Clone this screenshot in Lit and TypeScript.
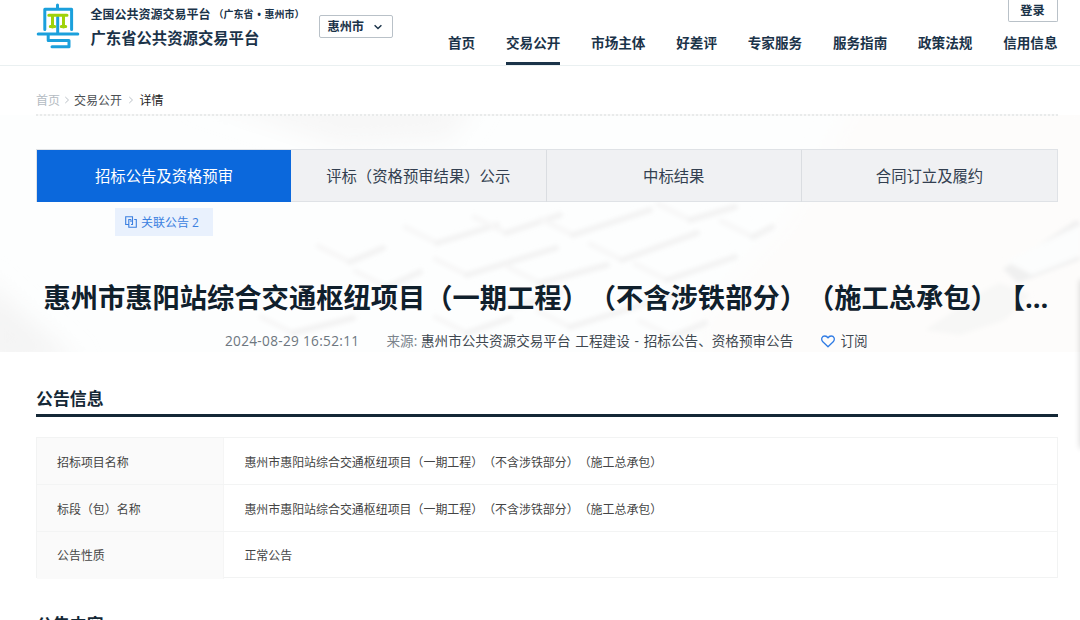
import { LitElement, html, css, svg } from "lit";
import { customElement, property } from "lit/decorators.js";
import { classMap } from "lit/directives/class-map.js";

const NAV = ["首页", "交易公开", "市场主体", "好差评", "专家服务", "服务指南", "政策法规", "信用信息"];
const STAGES = ["招标公告及资格预审", "评标（资格预审结果）公示", "中标结果", "合同订立及履约"];
const PROJECT = "惠州市惠阳站综合交通枢纽项目（一期工程）（不含涉铁部分）（施工总承包）";
const ROWS: [string, string][] = [
  ["招标项目名称", PROJECT],
  ["标段（包）名称", PROJECT],
  ["公告性质", "正常公告"],
];

@customElement("site-header")
export class SiteHeader extends LitElement {
  static styles = css`
    :host { display: block; height: 65px; border-bottom: 1px solid #eaf0f1; background: #fff; color: #1b3349; }
    .bar { display: flex; height: 65px; padding: 0 22.5px 0 36px; box-sizing: border-box; }
    .logo { width: 44px; height: 48px; margin-top: 3px; flex: none; }
    .names { margin-left: 10.5px; padding-top: 4px; flex: none; width: 228.500px; white-space: nowrap; font-weight: 700; }
    .line1 { font-size: 12px; line-height: 21px; height: 21px; display: flex; }
    .region { font-size: 10px; margin-left: 3px; font-weight: 600; display: flex; }
    .dot { width: 11px; text-align: center; font-weight: 700; }
    .line2 { font-size: 15.35px; line-height: 26px; height: 26px; }
    .city { flex: none; box-sizing: border-box; width: 73.500px; height: 23px; margin-top: 15px; border: 1px solid #b9c1c8; border-radius: 2px;
      display: flex; align-items: center; justify-content: space-between; padding: 0 9px 0 7.500px; font-size: 12.2px; font-weight: 600; line-height: 20px; }
    .right { flex: 1; display: flex; flex-direction: column; align-items: flex-end; }
    .login { box-sizing: border-box; width: 50px; height: 22px; border: 1px solid #b9c1c8; border-top: 0; border-radius: 0 0 2px 2px;
      font-size: 12.2px; font-weight: 600; line-height: 21px; text-align: center; }
    .nav { display: flex; gap: 30.75px; height: 43px; }
    .item { box-sizing: border-box; height: 42.500px; line-height: 41.500px; font-size: 13.6px; font-weight: 600; white-space: nowrap; }
    .on { border-bottom: 3px solid #1b3349; }
  `;
  render() {
    return html`<div class="bar">
      <svg class="logo" viewBox="0 0 44 48" fill="none" stroke="#1ba0dc" stroke-width="3" stroke-linecap="round" stroke-linejoin="round">
        <path d="M21.500 2v4M8.800 26.500V6.300H35.600V26.500M21.700 14v16M2.200 31.100H41.800M12.200 32.500v5H33v6.300H16" />
        <path d="M12.800 12.300H31M16.500 13v11M27.500 13v11M14.300 23.600h4.400M25.300 23.600h4.400" stroke="#a0d20a" stroke-width="3" />
      </svg>
      <div class="names">
        <div class="line1"><span>全国公共资源交易平台</span><span class="region"><span>（广东省</span><span class="dot">•</span><span>惠州市）</span></span></div>
        <div class="line2">广东省公共资源交易平台</div>
      </div>
      <div class="city"><span>惠州市</span>
        <svg width="10" height="8" viewBox="0 0 10 8" fill="none" stroke="#1b3349" stroke-width="1.400"><path d="M1.600 2.200 5 5.600 8.400 2.200" /></svg>
      </div>
      <div class="right">
        <div class="login">登录</div>
        <div class="nav">${NAV.map((n, i) => html`<span class=${classMap({ item: true, on: i === 1 })}>${n}</span>`)}</div>
      </div>
    </div>`;
  }
}

/** Faint out-of-focus keyboard and hand behind the notice title. */
@customElement("hero-backdrop")
export class HeroBackdrop extends LitElement {
  static styles = css`
    :host { display: block; }
    .art { display: block; width: 1080px; height: 237px; }
  `;
  render() {
    // Front corner of each key cap and the far end of its shaded edge.
    const keys = [
      [437, 128, 497, 110], [350, 147, 383, 133], [467, 160, 556, 133], [387, 172, 420, 157],
      [506, 118, 560, 100], [573, 120, 650, 95], [622, 145, 697, 118], [753, 122, 772, 112],
      [667, 165, 735, 142], [540, 168, 607, 150], [570, 212, 687, 176], [467, 218, 510, 203],
      [293, 218, 353, 203], [515, 192, 560, 178], [690, 105, 735, 92], [672, 222, 705, 208],
    ];
    return html`<svg class="art" viewBox="0 0 1080 237" preserveAspectRatio="none">
      <defs>
        <filter id="soft" x="-20%" y="-20%" width="140%" height="140%"><feGaussianBlur stdDeviation="2.200" /></filter>
        <filter id="wide" x="-30%" y="-30%" width="160%" height="160%"><feGaussianBlur stdDeviation="12" /></filter>
      </defs>
      <rect width="1080" height="237" fill="#fdfefe" />
      <g filter="url(#wide)">
        <path d="M190 -20H480L450 25 340 30Z" fill="#f7f7f7" />
        <path d="M-20 160 80 250H-20Z" fill="#f4f4f4" />
        <path d="M860 -20H1100V260H705L697 205 735 165 790 105Z" fill="#fdfcfb" />
      </g>
      <g filter="url(#soft)" fill="none" stroke-linecap="round" stroke-linejoin="round">
        ${keys.map(([a, b, c, d]) => svg`<path d="M${a - 32} ${b - 16}L${a} ${b}" stroke="#f7f7f7" stroke-width="5" /><path d="M${a} ${b}L${c} ${d}" stroke="#f3f3f3" stroke-width="6" />`)}
      </g>
      <g filter="url(#soft)">
        <path d="M1003 154 1076 105 1080 108V145L1018 168Z" fill="#f0f0f0" />
        <path d="M1006 146 1080 110V141L1032 160Z" fill="#fcfdfd" />
        <path d="M925 215 985 175 1000 168 1030 180 1005 205 960 220Z" fill="#f7f7f6" />
      </g>
    </svg>`;
  }
}

@customElement("info-section")
export class InfoSection extends LitElement {
  @property() heading = "";
  @property({ attribute: false }) rows: [string, string][] = [];
  static styles = css`
    :host { display: block; padding: 0 22px 0 36px; }
    .heading { height: 31px; line-height: 31px; padding-top: 1px; font-size: 16.9px; font-weight: 700; color: #142836; border-bottom: 3px solid #142836; }
    .table { margin-top: 20px; border: 1px solid #f2f3f3; box-sizing: border-box; height: 141px; display: grid; grid-template-rows: 47px 47px 1fr; font-size: 11.940px; color: #444; }
    .row { display: grid; grid-template-columns: 187px 1fr; grid-template-rows: 100%; border-bottom: 1px solid #f3f4f4; box-sizing: border-box; line-height: 48px; }
    .row:last-child { border-bottom: 0; line-height: 47px; }
    .key { background: #fafafa; border-right: 1px solid #f5f5f5; box-sizing: border-box; padding-left: 20px; }
    .value { padding-left: 20.400px; }
  `;
  render() {
    return html`<div class="heading">${this.heading}</div>
      ${this.rows.length
        ? html`<div class="table">${this.rows.map(([k, v]) => html`<div class="row"><div class="key">${k}</div><div class="value">${v}</div></div>`)}</div>`
        : ""}`;
  }
}

@customElement("app-root")
export class AppRoot extends LitElement {
  static styles = css`
    :host { display: block; position: relative; width: 1080px; height: 620px; overflow: hidden; background: #fff;
      font-family: "Open Sans", "Noto Sans CJK SC", sans-serif; text-spacing-trim: space-all; }
    .crumbs { height: 48px; margin: 0 22px 0 36px; display: flex; align-items: center; padding-top: 20px; box-sizing: border-box;
      font-size: 12px; color: #4c5054; }
    .home { color: #b4bbc2; }
    .here { color: #222; }
    .sep { width: 14px; flex: none; display: flex; justify-content: center; }
    .sep2 { width: 17.5px; }
    .hero { position: relative; height: 238px; }
    .backdrop { position: absolute; inset: 1px 0 0 0; }
    .content { position: relative; padding: 0 22px 0 36px; }
    .rule { height: 2px; background: repeating-linear-gradient(90deg, #e9ebeb 0 2px, #f9f9f9 2px 4px); }
    .tabs { margin-top: 33px; display: grid; grid-template-columns: 254px 255.500px 255.500px 1fr; height: 53px; box-sizing: border-box;
      border: 1px solid #dfe2e6; background: #f0f1f3; }
    .tab { text-align: center; line-height: 52px; font-size: 15.35px; color: #333f50; border-right: 1px solid #dadde1; box-sizing: border-box; }
    .tab:last-child { border-right: 0; }
    .active { background: #0b68dc; color: #fff; border-right: 0; }
    .related { margin: 6px 0 0 79px; width: 98px; height: 28px; display: flex; align-items: center; box-sizing: border-box; padding-left: 10px; gap: 4px;
      background: #e9f1fd; color: #3b7fe0; font-size: 12px; white-space: nowrap; }
    .title { margin: 40px 0 0; padding-left: 7.500px; font-size: 27.270px; line-height: 43px; height: 44px; font-weight: 700; color: #10202c; white-space: nowrap; }
    .meta { display: flex; align-items: center; margin-top: 11px; padding-left: 189px; height: 20px; line-height: 20px; font-size: 13.6px; color: #3f4850; white-space: nowrap; }
    .date { color: #6d777f; width: 161.500px; letter-spacing: 0.32px; }
    .label { color: #7b848c; width: 34.500px; }
    .source { width: 399.500px; word-spacing: 1.300px; }
    .heart { margin-right: 6px; }
    .notice { padding-top: 30px; display: block; }
    .body { margin-top: 30px; display: block; }
    .drawer { position: absolute; left: 1080px; top: 280px; width: 20px; height: 168px; box-shadow: 0 0 6px rgba(0, 0, 0, 0.16); }
  `;
  render() {
    const arrow = html`<svg width="6" height="8" viewBox="0 0 6 8" fill="none" stroke="#bcc2c8" stroke-width="1"><path d="M1.300 1 4.500 4 1.300 7" /></svg>`;
    return html`<site-header></site-header>
      <div class="crumbs">
        <span class="home">首页</span><span class="sep">${arrow}</span><span>交易公开</span><span class="sep sep2">${arrow}</span><span class="here">详情</span>
      </div>
      <div class="hero">
        <hero-backdrop class="backdrop"></hero-backdrop>
        <div class="content">
          <div class="rule"></div>
          <div class="tabs">${STAGES.map((s, i) => html`<div class=${classMap({ tab: true, active: i === 0 })}>${s}</div>`)}</div>
          <div class="related">
            <svg width="12" height="12" viewBox="0 0 12 12" fill="none" stroke="#3b7fe0" stroke-width="1.100"><path d="M3.800 8.500H.700V.700H7.500V3.500M6 3.500H3.800V11.300H11.300V3.500H9.200M7.500 3.500V8.500H6M6 3.500V6" /></svg>
            <span>关联公告 2</span>
          </div>
          <h1 class="title">${PROJECT}【…</h1>
          <div class="meta">
            <span class="date">2024-08-29 16:52:11</span><span class="label">来源:</span><span class="source">惠州市公共资源交易平台 工程建设 - 招标公告、资格预审公告</span>
            <svg class="heart" width="14" height="13" viewBox="0 0 14 13" fill="none" stroke="#2f7be4" stroke-width="1.300" stroke-linejoin="round"><path d="M7 11.800 1.800 6.800C-.500 4 1.200 1 3.800 1 5.300 1 6.400 1.800 7 2.900 7.600 1.800 8.700 1 10.200 1 12.800 1 14.500 4 12.200 6.800Z" /></svg>
            <span>订阅</span>
          </div>
        </div>
      </div>
      <info-section class="notice" heading="公告信息" .rows=${ROWS}></info-section>
      <info-section class="body" heading="公告内容"></info-section>
      <div class="drawer"></div>`;
  }
}
